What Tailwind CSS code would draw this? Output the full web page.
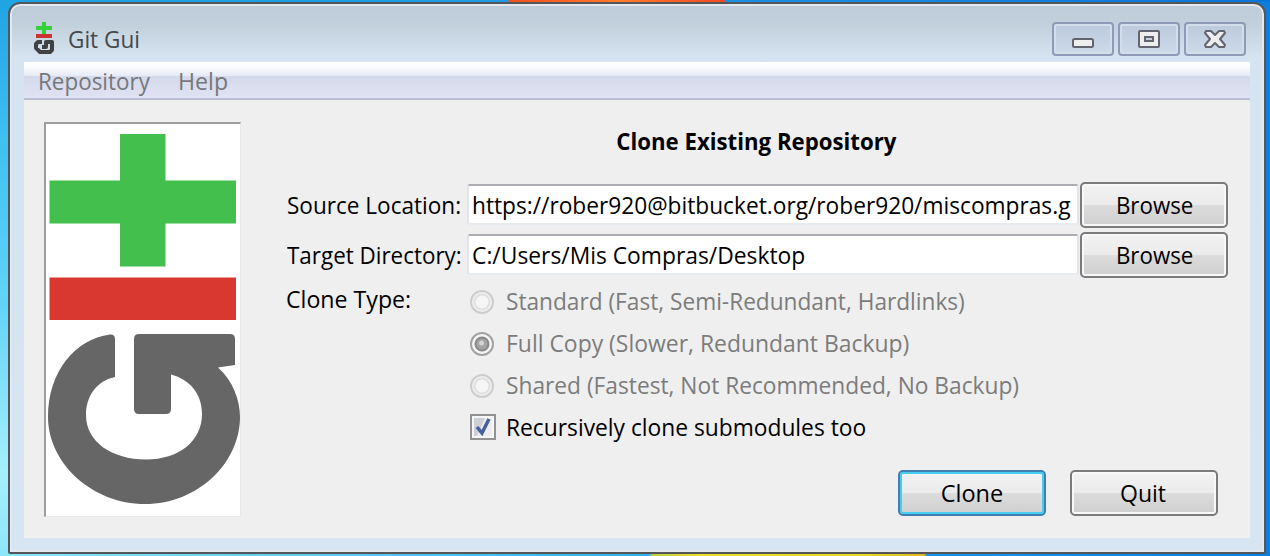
<!DOCTYPE html>
<html lang="en">
<head>
<meta charset="utf-8">
<title>Git Gui</title>
<script src="https://cdn.jsdelivr.net/npm/@tailwindcss/browser@4"></script>
</head>
<body class="w-[1270px] h-[556px] overflow-hidden bg-[linear-gradient(90deg,transparent_50%,#0a7fe0_50%),linear-gradient(180deg,#1fa4e4,#3fc0f0_25%,#62d4f8_55%,#a5effb_85%,#8ce6fa)] font-['Open_Sans','Noto_Sans',sans-serif] text-[24px] leading-[32px] text-black whitespace-nowrap">
<div class="flex flex-col h-[556px]">
  <!-- desktop strip above the window -->
  <div class="h-[2px] shrink-0 bg-[linear-gradient(90deg,#1fa4e4_0,#1c9ae4_508px,#f0501f_509px,#ff7a2c_620px,#f04a26_724px,#1c90e4_726px,#0a74d8_1270px)]"></div>
  <main class="ml-[8px] w-[1258px] h-[552px] shrink-0 flex flex-col rounded-t-[12px] rounded-b-[2px] border-2 border-[#54575a] bg-[linear-gradient(180deg,#bdcbd9_0,#c2d0dc_20px,#d6e4f1_54px,#d7e4f2_100%)] shadow-[inset_0_0_0_2px_#e4e9ef]">
    <header class="h-[58px] shrink-0 flex items-start pl-[20px] pr-[18px]">
      <svg class="mt-[16px] w-[30px] h-[36px]" viewBox="0 0 30 36">
        <path d="M14 2v12M6 8h16" stroke="#35d03a" stroke-width="4"/>
        <path d="M6 16h16" stroke="#cc3331" stroke-width="4"/>
        <path d="M12 22H8l-2 2v4l4 4h10l2-2v-8h-6v5h-4" fill="none" stroke="#3f4142" stroke-width="4" stroke-linejoin="round"/>
      </svg>
      <h1 class="mt-[19px] ml-[8px] origin-left scale-x-[.94] text-[#45494d]">Git Gui</h1>
      <div class="ml-auto mt-[18px] flex gap-[4px]">
        <div class="w-[62px] h-[34px] rounded-[4px] border-2 border-[#8e9ab8] bg-[linear-gradient(#bccadb,#cddaea)] shadow-[inset_0_0_0_2px_#d3deea]">
          <svg class="w-[58px] h-[30px]" viewBox="0 0 58 30"><rect x="19" y="15" width="20" height="8" rx="1.5" fill="#eee" stroke="#62656f" stroke-width="2"/></svg>
        </div>
        <div class="w-[62px] h-[34px] rounded-[4px] border-2 border-[#8e9ab8] bg-[linear-gradient(#bccadb,#cddaea)] shadow-[inset_0_0_0_2px_#d3deea]">
          <svg class="w-[58px] h-[30px]" viewBox="0 0 58 30"><rect x="19" y="7" width="20" height="16" rx="1" fill="#eee" stroke="#62656f" stroke-width="2"/><rect x="25" y="13" width="8" height="4" fill="#c5cfdd" stroke="#62656f" stroke-width="2"/></svg>
        </div>
        <div class="w-[62px] h-[34px] rounded-[4px] border-2 border-[#8e9ab8] bg-[linear-gradient(#bccadb,#cddaea)] shadow-[inset_0_0_0_2px_#d3deea]">
          <svg class="w-[58px] h-[30px]" viewBox="0 0 58 30"><path d="M20 7h5l4 4 4-4h5l1 2-5 6 5 6-1 2h-5l-4-4-4 4h-5l-1-2 5-6-5-6z" fill="#eee" stroke="#62656f" stroke-width="2" stroke-linejoin="round"/></svg>
        </div>
      </div>
    </header>
    <section class="mx-[14px] h-[476px] shrink-0 flex flex-col bg-[#efefef]">
      <nav class="h-[38px] shrink-0 flex pl-[14px] border-b-2 border-[#b9bed2] bg-[linear-gradient(180deg,#fff_0,#fcfdfe_4px,#e6eaf5_14px,#d4daeb_14px,#dfe2f3_36px)] text-[#77777c]">
        <div class="mt-[3px] w-[140px]"><span class="inline-block origin-left scale-x-[.935]">Repository</span></div>
        <div class="mt-[3px]"><span class="inline-block origin-left scale-x-[.965]">Help</span></div>
      </nav>
      <div class="flex flex-1">
        <!-- logo panel -->
        <div class="ml-[20px] mt-[22px] mr-[1px] w-[197px] h-[395px] shrink-0 bg-white border-t-2 border-l-2 border-r border-b border-t-[#9d9d9d] border-l-[#9d9d9d] border-r-[#e8e8e8] border-b-[#e8e8e8]">
          <svg class="block w-[194px] h-[392px]" viewBox="46 124 194 392">
            <path d="M120 134h45.500v46.500h70.500v43h-70.500v43H120v-43H49.500v-43H120z" fill="#42bf4c"/>
            <path d="M49.500 277.500H236V320H49.500z" fill="#d93830"/>
            <path d="M110 334.500Q115 334 115 339V377C96 381 86 397 86 415C86 442 112 459.500 146 459.500C179 459.500 202 441 202 414C202 392 188 379 171 374.500V409Q171 414 166 414H139Q134 414 134 409V339Q134 334 139 334H230Q235 334 235 339V365L218 367.500C233 381 240 400 240 417C240 463 198 504 145 504C92 504 48 463 48 417C48 372 75 339 110 334.500Z" fill="#666"/>
          </svg>
        </div>
        <div class="ml-[44px] w-[942px] flex flex-col pt-[26px]">
          <h2 class="h-[32px] text-center font-bold"><span class="inline-block scale-x-[.925] -translate-x-[1px] -translate-y-px">Clone Existing Repository</span></h2>
          <div class="mt-[24px] grid grid-cols-[181px_611px_148px] gap-x-[1px] gap-y-[4px] h-[96px]">
            <label class="h-[46px] pt-[7px] pl-[0.5px]"><span class="inline-block origin-left scale-x-[.94]">Source Location:</span></label>
            <div class="mt-[2px] -ml-px h-[41px] rounded-[3px] bg-white border-2 border-t-[#acadb5] border-x-[#e2e4ea] border-b-[#e6ebf2] pl-[3px] pt-[3px] overflow-hidden"><span class="inline-block origin-left scale-x-[.946]">https://rober920@bitbucket.org/rober920/miscompras.g</span></div>
            <button class="h-[46px] rounded-[5px] border-2 border-[#7b7b7b] bg-[linear-gradient(#f2f2f2_0,#ebebeb_50%,#dcdcdc_50%,#cfcfcf_100%)] shadow-[inset_0_0_0_2px_#f8f8f8]"><span class="inline-block translate-x-px scale-x-[.93]">Browse</span></button>
            <label class="h-[46px] pt-[7px] pl-[0.5px]"><span class="inline-block origin-left scale-x-[.934]">Target Directory:</span></label>
            <div class="mt-[2px] -ml-px h-[41px] rounded-[3px] bg-white border-2 border-t-[#acadb5] border-x-[#e2e4ea] border-b-[#e6ebf2] pl-[3px] pt-[3px] overflow-hidden"><span class="inline-block origin-left scale-x-[.951]">C:/Users/Mis Compras/Desktop</span></div>
            <button class="h-[46px] rounded-[5px] border-2 border-[#7b7b7b] bg-[linear-gradient(#f2f2f2_0,#ebebeb_50%,#dcdcdc_50%,#cfcfcf_100%)] shadow-[inset_0_0_0_2px_#f8f8f8]"><span class="inline-block translate-x-px scale-x-[.93]">Browse</span></button>
          </div>
          <div class="flex">
            <div class="w-[184px] pt-[5px]"><span class="inline-block origin-left scale-x-[.965]">Clone Type:</span></div>
            <div class="flex flex-col gap-[10px] pt-[7px] text-[#7c7c7c]">
              <div class="flex items-center gap-[10px]"><svg class="w-[26px] h-[26px]" viewBox="0 0 26 26"><circle cx="12" cy="14" r="11" fill="#f0f0f0" stroke="#cdcdcd" stroke-width="2"/><circle cx="12" cy="14" r="7.500" fill="#f5f5f5" stroke="#e0e0e0" stroke-width="2"/></svg><span class="inline-block origin-left scale-x-[.944]">Standard (Fast, Semi-Redundant, Hardlinks)</span></div>
              <div class="flex items-center gap-[10px]"><svg class="w-[26px] h-[26px]" viewBox="0 0 26 26"><circle cx="12" cy="14" r="11" fill="#f5f5f5" stroke="#a2a2a2" stroke-width="2"/><circle cx="12" cy="14" r="6.500" fill="#a4a4a4" stroke="#888" stroke-width="2"/><circle cx="11.500" cy="13" r="2.500" fill="#d4d4d4"/></svg><span class="inline-block origin-left scale-x-[.955]">Full Copy (Slower, Redundant Backup)</span></div>
              <div class="flex items-center gap-[10px]"><svg class="w-[26px] h-[26px]" viewBox="0 0 26 26"><circle cx="12" cy="14" r="11" fill="#f0f0f0" stroke="#cdcdcd" stroke-width="2"/><circle cx="12" cy="14" r="7.500" fill="#f5f5f5" stroke="#e0e0e0" stroke-width="2"/></svg><span class="inline-block origin-left scale-x-[.947]">Shared (Fastest, Not Recommended, No Backup)</span></div>
              <div class="flex items-center gap-[10px] text-black"><svg class="w-[26px] h-[26px]" viewBox="0 0 26 26"><rect x="1" y="1" width="24" height="24" fill="#f6f6f6" stroke="#929292" stroke-width="2"/><path d="M4 4h18v18H4z" fill="#cdd1d7"/><path d="M15 4h7v18H7z" fill="#eceded"/><path d="M7 13l5 6L19 5" fill="none" stroke="#475f9e" stroke-width="3.500"/></svg><span class="inline-block origin-left scale-x-[.949]">Recursively clone submodules too</span></div>
            </div>
          </div>
          <div class="mt-[27px] mr-[10px] flex justify-end gap-[24px]">
            <button class="w-[148px] h-[46px] rounded-[5px] border-2 border-[#3f80b0] bg-[linear-gradient(#f2f2f2_0,#ebebeb_50%,#dcdcdc_50%,#cfcfcf_100%)] shadow-[inset_0_0_0_2px_#48cdf2]"><span class="inline-block scale-x-[.98]">Clone</span></button>
            <button class="w-[148px] h-[46px] rounded-[5px] border-2 border-[#7b7b7b] bg-[linear-gradient(#f2f2f2_0,#ebebeb_50%,#dcdcdc_50%,#cfcfcf_100%)] shadow-[inset_0_0_0_2px_#f8f8f8]"><span class="inline-block scale-x-[.96] -translate-x-px">Quit</span></button>
          </div>
        </div>
      </div>
    </section>
  </main>
  <!-- desktop strip below the window -->
  <div class="h-[2px] shrink-0 bg-[linear-gradient(90deg,#8ce6fa_0,#5fcdf0_300px,#35b0e8_650px,#c0cc40_652px,#ecdf28_700px,#ecd820_860px,#e0b820_924px,#1a94e6_927px,#0a7fe0_1270px)]"></div>
</div>
</body>
</html>
